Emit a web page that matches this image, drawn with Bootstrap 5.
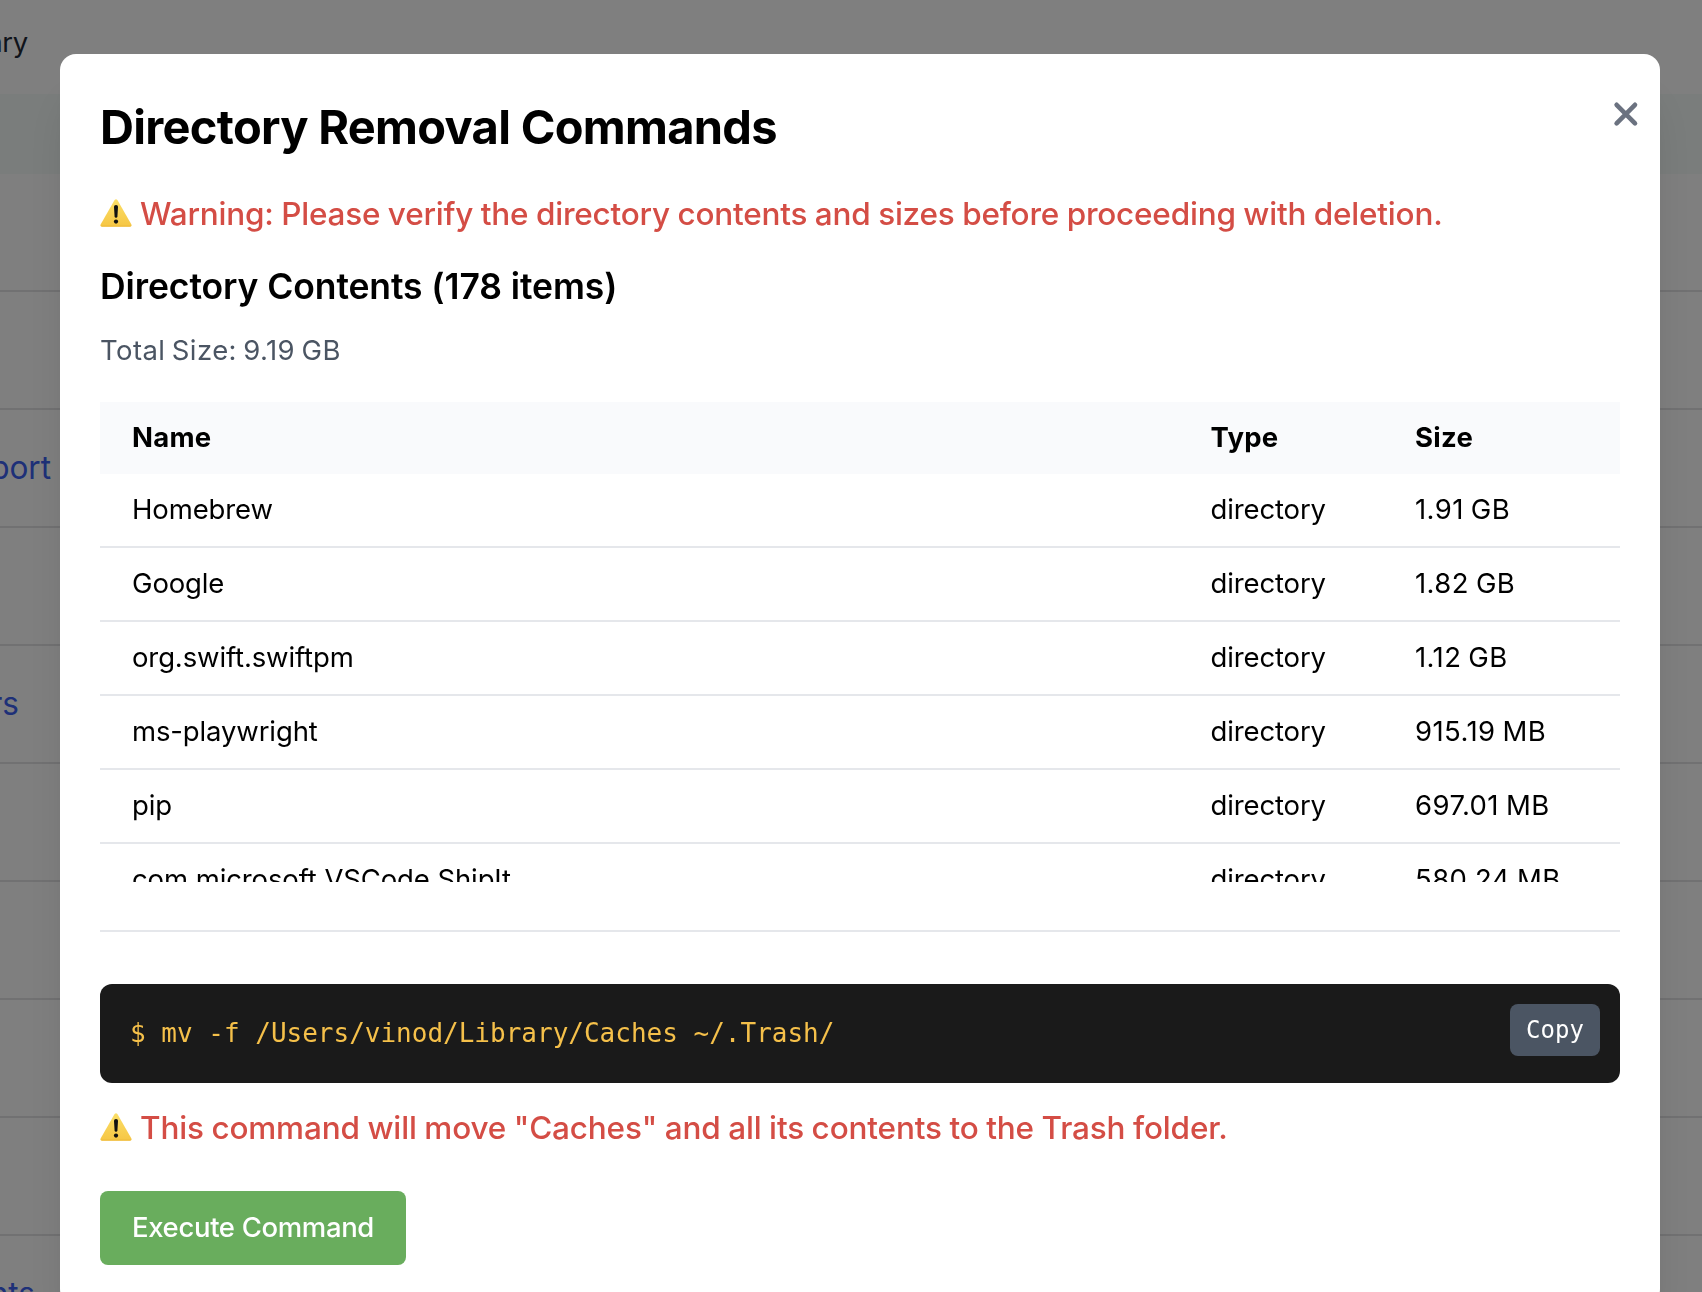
<!DOCTYPE html>
<html lang="en">
<head>
<meta charset="utf-8">
<meta name="viewport" content="width=device-width, initial-scale=1">
<title>Directory Removal Commands</title>
<link href="https://cdn.jsdelivr.net/npm/bootstrap@5.3.0/dist/css/bootstrap.min.css" rel="stylesheet">
<style>
  body { font-family: Inter, "Liberation Sans", sans-serif; color: #000; height: 100vh; overflow: hidden; }

  /* Page behind the dialog */
  .page-path { height: 94px; font-size: 27.5px; letter-spacing: -.3px; line-height: 40px; padding-top: 22px; color: #1f2937; }
  .page-head { height: 80px; background: #f5faf8; }
  .page-row { height: 118px; border-bottom: 2px solid #e2e2e4; font-size: 31.5px; color: #3c60f0; }
  .clip-end { overflow: hidden; white-space: nowrap; }

  /* Dialog */
  .veil { background: rgba(0, 0, 0, .5); padding: 54px 42px 0 60px; }
  .dialog-box { padding: 40px; border-radius: 16px; box-shadow: 0 40px 50px -10px rgba(0,0,0,.12), 0 16px 20px -12px rgba(0,0,0,.12); }
  .dialog-title { font-size: 47px; line-height: 66px; letter-spacing: -.7px; margin-bottom: 30px; }
  .warn-line { font-size: 31.5px; line-height: 48px; font-weight: 500; letter-spacing: -.21px; word-spacing: -.6px; color: #d44d45; gap: 8px; }
  .warn-line svg { flex: none; margin-top: -2px; }
  .sub-title { font-size: 35.5px; line-height: 50px; font-weight: 600; letter-spacing: -.1px; margin: 24px 0 18px; }
  .total-size { font-size: 27.5px; line-height: 40px; letter-spacing: .42px; word-spacing: -1.8px; color: #4b5563; margin: 0 0 32px; }
  .list-wrap { padding-bottom: 48px; border-bottom: 2px solid #e5e7eb; margin-bottom: 52px; }
  .list-scroll { height: 480px; overflow: hidden; }
  .dir-table { table-layout: fixed; font-size: 27.5px; line-height: 40px; letter-spacing: -.13px; --bs-table-color: #000; --bs-table-bg: #fff; }
  .dir-table > :not(caption) > * > * { padding: 15px 32px 17px; border-bottom: 2px solid #e5e7eb; }
  .dir-table > thead > tr > th { background: #f9fafc; border-bottom: 0; font-weight: 700; letter-spacing: .25px; }
  .dir-table td:last-child { letter-spacing: .42px; word-spacing: -1.2px; }
  .col-type { width: 204.5px; }
  .col-size { width: 237px; }
  .cmd-box { height: 99px; background: #1a1a1a; border-radius: 12px; padding: 20px 20px 0 30px; font-family: "DejaVu Sans Mono", monospace; }
  .cmd-text { font-size: 26px; line-height: 40px; color: #f5c04a; padding-top: 9px; white-space: pre; }
  .btn-copy { width: 90px; height: 52px; padding: 0; border: 0; border-radius: 8px; background: #4b5563; color: #fff; font-size: 24px; line-height: 52px; }
  .run-note { margin: 21px 0 39px; letter-spacing: -.16px; }
  .btn-run { height: 74px; width: 306px; padding: 0; border: 0; border-radius: 8px; background: #69ad5d; color: #fff; font-size: 27.5px; font-weight: 500; letter-spacing: -.35px; }
  .btn-close-x { position: absolute; right: 20px; top: 46px; width: 28px; height: 28px; padding: 0; border: 0; background: none; line-height: 0; }
</style>
<script src="https://cdn.jsdelivr.net/npm/bootstrap@5.3.0/dist/js/bootstrap.bundle.min.js"></script>
</head>
<body>
<main class="d-flex flex-column">
  <div class="page-path"><div class="clip-end d-flex justify-content-end" style="width:28px"><span>/Users/vinod/Library</span></div></div>
  <div class="page-head"></div>
  <div class="page-row"></div>
  <div class="page-row"></div>
  <div class="page-row d-flex align-items-center"><div class="clip-end d-flex justify-content-end" style="width:51px"><span>Application Support</span></div></div>
  <div class="page-row"></div>
  <div class="page-row d-flex align-items-center"><div class="clip-end d-flex justify-content-end" style="width:19px"><span>Containers</span></div></div>
  <div class="page-row"></div>
  <div class="page-row"></div>
  <div class="page-row"></div>
  <div class="page-row"></div>
  <div class="page-row d-flex align-items-center"><div class="clip-end d-flex justify-content-end" style="width:35px"><span>LaunchAgents</span></div></div>
</main>

<div class="veil position-fixed top-0 start-0 w-100 h-100 overflow-hidden">
  <div class="dialog-box bg-white position-relative" role="dialog" aria-labelledby="dlg-title">
    <button class="btn-close-x" type="button" aria-label="Close">
      <svg width="28" height="28" viewBox="0 0 28 28" fill="none" stroke="#6b7280" stroke-width="4.6" stroke-linecap="round"><path d="M4.6 4.8 23 23.4M23 4.8 4.6 23.4"/></svg>
    </button>
    <h1 class="dialog-title fw-bold" id="dlg-title">Directory Removal Commands</h1>

    <div class="warn-line d-flex align-items-center">
      <svg width="32" height="28" viewBox="0 0 32 28"><defs><linearGradient id="amber" x1="0" y1="0" x2="0" y2="1"><stop offset="0" stop-color="#fbdf68"/><stop offset="1" stop-color="#f6c644"/></linearGradient></defs><path d="M14.6 1.1Q16-.8 17.4 1.1L31.4 25.6Q32.2 27.6 30 27.7H2Q-.2 27.6.6 25.6Z" fill="url(#amber)"/><path d="M.9 26.3Q.6 27.6 2 27.7H30Q31.4 27.6 31.1 26.3Z" fill="#edb93a" opacity=".6"/><path d="M14 7.6Q14 6 16 6T18 7.6L17.4 17.4Q17.3 18.7 16 18.7T14.6 17.4Z" fill="#111"/><circle cx="16" cy="22.6" r="2.1" fill="#111"/></svg>
      <span>Warning: Please verify the directory contents and sizes before proceeding with deletion.</span>
    </div>

    <h2 class="sub-title">Directory Contents (178 items)</h2>
    <p class="total-size">Total Size: 9.19 GB</p>

    <div class="list-wrap">
      <div class="list-scroll">
        <table class="table dir-table mb-0">
          <colgroup><col><col class="col-type"><col class="col-size"></colgroup>
          <thead><tr><th>Name</th><th>Type</th><th>Size</th></tr></thead>
          <tbody>
            <tr><td>Homebrew</td><td>directory</td><td>1.91 GB</td></tr>
            <tr><td>Google</td><td>directory</td><td>1.82 GB</td></tr>
            <tr><td>org.swift.swiftpm</td><td>directory</td><td>1.12 GB</td></tr>
            <tr><td>ms-playwright</td><td>directory</td><td>915.19 MB</td></tr>
            <tr><td>pip</td><td>directory</td><td>697.01 MB</td></tr>
            <tr><td>com.microsoft.VSCode.ShipIt</td><td>directory</td><td>580.24 MB</td></tr>
          </tbody>
        </table>
      </div>
    </div>

    <div class="cmd-box d-flex justify-content-between align-items-start">
      <div class="cmd-text">$ mv -f /Users/vinod/Library/Caches ~/.Trash/</div>
      <button class="btn btn-copy" type="button">Copy</button>
    </div>

    <div class="warn-line run-note d-flex align-items-center">
      <svg width="32" height="28" viewBox="0 0 32 28"><path d="M14.6 1.1Q16-.8 17.4 1.1L31.4 25.6Q32.2 27.6 30 27.7H2Q-.2 27.6.6 25.6Z" fill="url(#amber)"/><path d="M.9 26.3Q.6 27.6 2 27.7H30Q31.4 27.6 31.1 26.3Z" fill="#edb93a" opacity=".6"/><path d="M14 7.6Q14 6 16 6T18 7.6L17.4 17.4Q17.3 18.7 16 18.7T14.6 17.4Z" fill="#111"/><circle cx="16" cy="22.6" r="2.1" fill="#111"/></svg>
      <span>This command will move "Caches" and all its contents to the Trash folder.</span>
    </div>

    <button class="btn btn-run d-block" type="button">Execute Command</button>
  </div>
</div>
</body>
</html>
